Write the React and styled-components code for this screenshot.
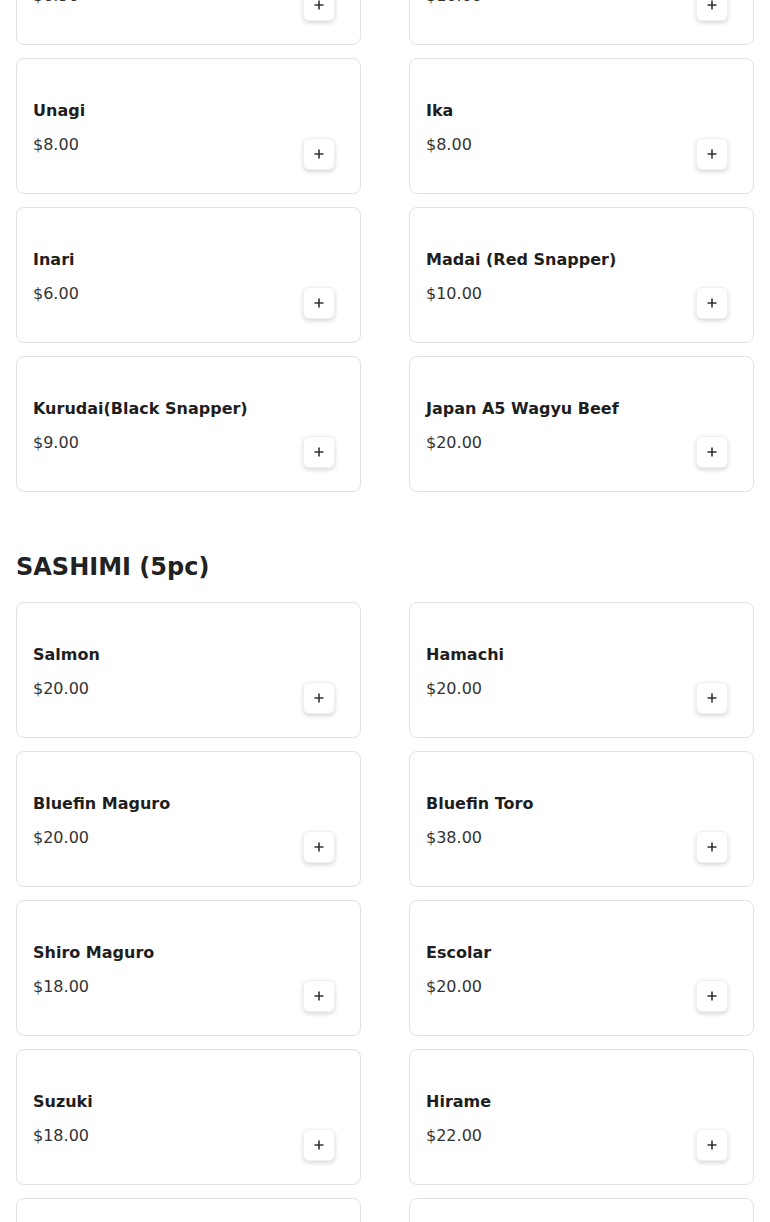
import React from "react";
import styled, {createGlobalStyle} from "styled-components";

const GlobalStyle = createGlobalStyle`
  body {
    margin: 0;
    background: #fff;
    font-family: "DejaVu Sans", "Liberation Sans", sans-serif;
    color: #222;
  }
`;

// the screenshot is taken part way down the menu, so the first row is cut
const Page = styled.main`
  padding: 0 16px;
  margin-top: -91px;
`;

const Section = styled.section`
  & + & {
    padding-top: 40px;
  }
`;

const SectionTitle = styled.h2`
  margin: 21px 0;
  font-size: 24px;
  line-height: 28px;
  font-weight: 700;
  color: #222;
`;

const Grid = styled.div`
  display: grid;
  grid-template-columns: 1fr 1fr;
  column-gap: 48px;
  row-gap: 13px;
`;

const Card = styled.div`
  box-sizing: border-box;
  height: 136px;
  display: grid;
  grid-template-columns: 1fr auto;
  align-items: center;
  padding: 0 25px 0 16px;
  border: 1px solid #e2e2e2;
  border-radius: 8px;
  background: #fff;
`;

const Info = styled.div`
  display: flex;
  flex-direction: column;
  gap: 10px;
  padding-top: 4px;
`;

const Name = styled.div`
  font-size: 16px;
  line-height: 24px;
  font-weight: 700;
  color: #1e1e1e;
`;

const Price = styled.div`
  font-size: 16px;
  line-height: 24px;
  color: #333;
`;

const AddButton = styled.button`
  align-self: end;
  margin-bottom: 23px;
  width: 32px;
  height: 32px;
  display: flex;
  align-items: center;
  justify-content: center;
  padding: 0;
  border: 1px solid #f0f0f0;
  border-radius: 6px;
  background: #fff;
  box-shadow: 0 2px 4px rgba(0, 0, 0, 0.16);
  color: #333;
  cursor: pointer;
`;

const PlusIcon = () => (
  <svg width="12" height="12" viewBox="0 0 12 12" fill="none">
    <path d="M6 1.5v9M1.5 6h9" stroke="currentColor" strokeWidth="1.6" />
  </svg>
);

const menu = [
  {
    title: "NIGIRI (2pc)",
    hideTitle: true,
    items: [
      ["Tamago", "$6.50"],
      ["Uni", "$16.00"],
      ["Unagi", "$8.00"],
      ["Ika", "$8.00"],
      ["Inari", "$6.00"],
      ["Madai (Red Snapper)", "$10.00"],
      ["Kurudai(Black Snapper)", "$9.00"],
      ["Japan A5 Wagyu Beef", "$20.00"],
    ],
  },
  {
    title: "SASHIMI (5pc)",
    items: [
      ["Salmon", "$20.00"],
      ["Hamachi", "$20.00"],
      ["Bluefin Maguro", "$20.00"],
      ["Bluefin Toro", "$38.00"],
      ["Shiro Maguro", "$18.00"],
      ["Escolar", "$20.00"],
      ["Suzuki", "$18.00"],
      ["Hirame", "$22.00"],
      ["Madai", "$20.00"],
      ["Kampachi", "$22.00"],
    ],
  },
];

function MenuItem({name, price}) {
  return (
    <Card>
      <Info>
        <Name>{name}</Name>
        <Price>{price}</Price>
      </Info>
      <AddButton aria-label={`Add ${name}`}>
        <PlusIcon />
      </AddButton>
    </Card>
  );
}

export default function App() {
  return (
    <>
      <GlobalStyle />
      <Page>
        {menu.map(section => (
          <Section key={section.title}>
            {!section.hideTitle && <SectionTitle>{section.title}</SectionTitle>}
            <Grid>
              {section.items.map(([name, price]) => (
                <MenuItem key={name} name={name} price={price} />
              ))}
            </Grid>
          </Section>
        ))}
      </Page>
    </>
  );
}
